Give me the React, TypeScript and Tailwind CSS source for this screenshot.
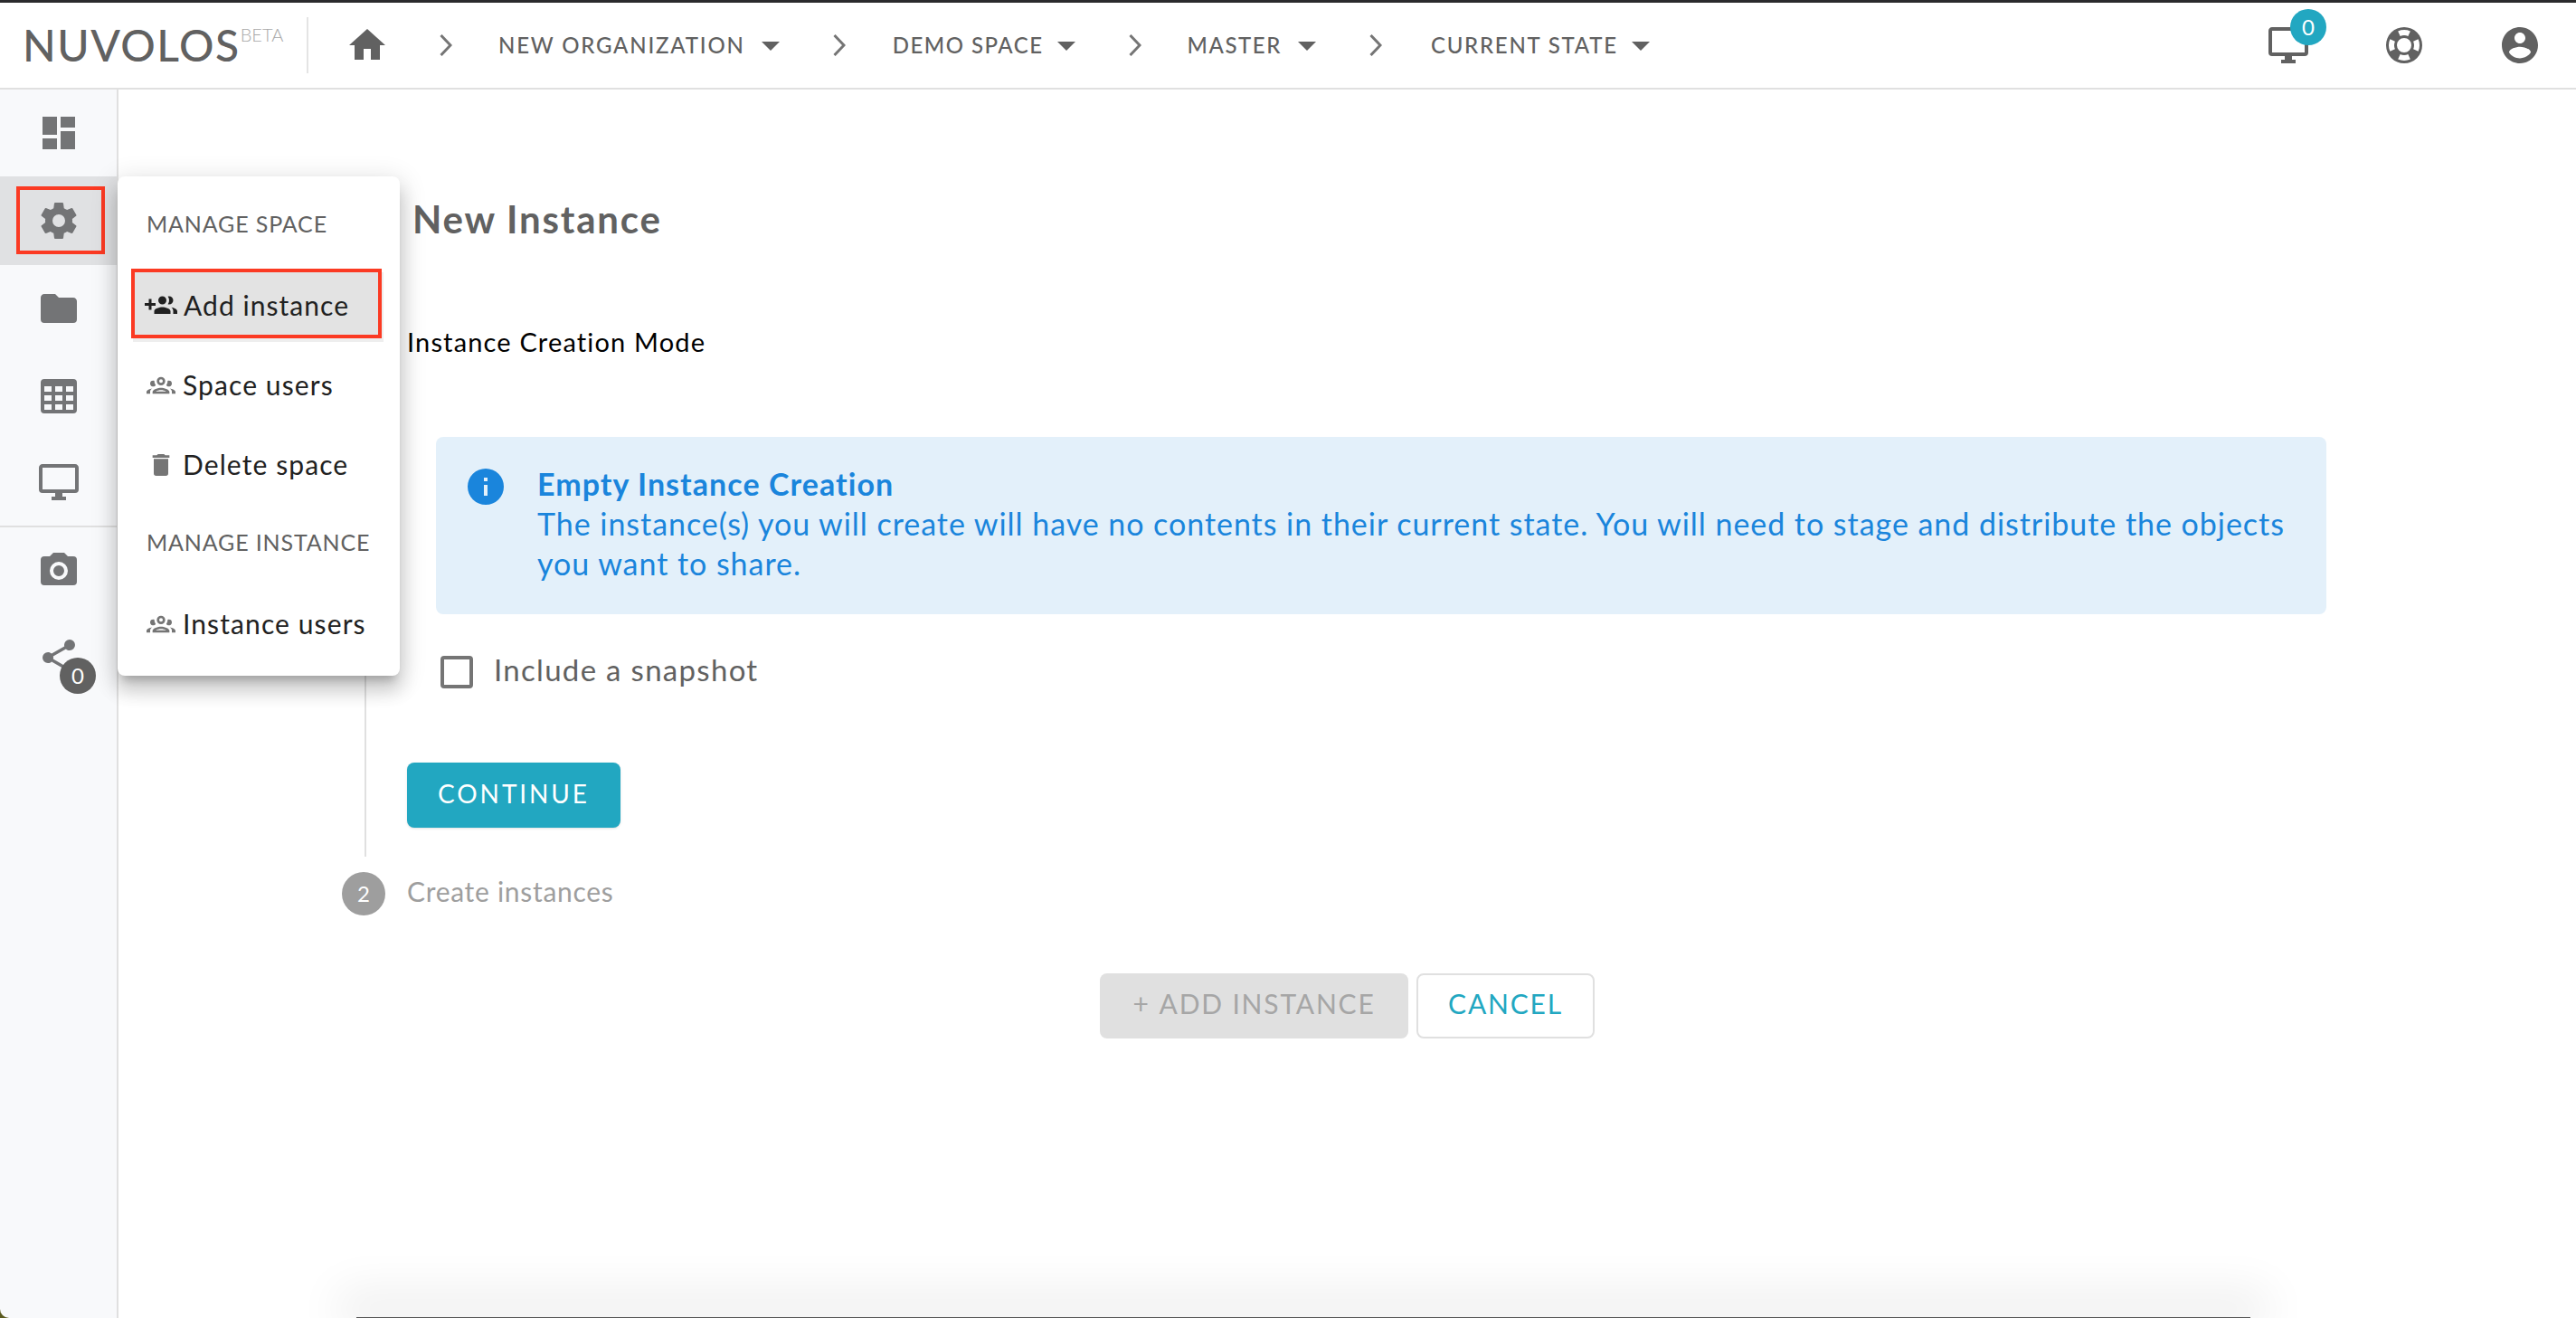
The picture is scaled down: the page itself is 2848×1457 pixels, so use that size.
const p = {
  home: "M10,20V14H14V20H19V12H22L12,3L2,12H5V20H10Z",
  caret: "M7,10L12,15L17,10H7Z",
  monitor: "M21,16H3V4H21M21,2H3C1.89,2 1,2.89 1,4V16A2,2 0 0,0 3,18H10V20H8V22H16V20H14V18H21A2,2 0 0,0 23,16V4C23,2.89 22.1,2 21,2Z",
  lifebuoy: "M19.79,15.41C20.74,13.24 20.74,10.75 19.79,8.59L17.05,9.83C17.65,11.21 17.65,12.78 17.06,14.17L19.79,15.41M15.42,4.21C13.25,3.26 10.76,3.26 8.59,4.21L9.83,6.95C11.22,6.35 12.79,6.35 14.18,6.95L15.42,4.21M4.21,8.58C3.26,10.76 3.26,13.24 4.21,15.42L6.95,14.17C6.35,12.79 6.35,11.21 6.95,9.82L4.21,8.58M8.59,19.79C10.76,20.74 13.25,20.74 15.42,19.79L14.18,17.05C12.8,17.65 11.22,17.65 9.84,17.06L8.59,19.79M12,2A10,10 0 0,1 22,12A10,10 0 0,1 12,22A10,10 0 0,1 2,12A10,10 0 0,1 12,2M12,8A4,4 0 0,0 8,12A4,4 0 0,0 12,16A4,4 0 0,0 16,12A4,4 0 0,0 12,8Z",
  account: "M12 2C6.48 2 2 6.48 2 12s4.48 10 10 10 10-4.48 10-10S17.52 2 12 2zm0 3c1.66 0 3 1.34 3 3s-1.34 3-3 3-3-1.34-3-3 1.34-3 3-3zm0 14.2c-2.5 0-4.71-1.28-6-3.22.03-1.99 4-3.08 6-3.08 1.99 0 5.97 1.09 6 3.08-1.29 1.94-3.5 3.22-6 3.22z",
  dashboard: "M13,3V9H21V3M13,21H21V11H13M3,21H11V15H3M3,13H11V3H3V13Z",
  cog: "M12,15.5A3.5,3.5 0 0,1 8.5,12A3.5,3.5 0 0,1 12,8.5A3.5,3.5 0 0,1 15.5,12A3.5,3.5 0 0,1 12,15.5M19.43,12.97C19.47,12.65 19.5,12.33 19.5,12C19.5,11.67 19.47,11.34 19.43,11L21.54,9.37C21.73,9.22 21.78,8.95 21.66,8.73L19.66,5.27C19.54,5.05 19.27,4.96 19.05,5.05L16.56,6.05C16.04,5.66 15.5,5.32 14.87,5.07L14.5,2.42C14.46,2.18 14.25,2 14,2H10C9.75,2 9.54,2.18 9.5,2.42L9.13,5.07C8.5,5.32 7.96,5.66 7.44,6.05L4.95,5.05C4.73,4.96 4.46,5.05 4.34,5.27L2.34,8.73C2.21,8.95 2.27,9.22 2.46,9.37L4.57,11C4.53,11.34 4.5,11.67 4.5,12C4.5,12.33 4.53,12.65 4.57,12.97L2.46,14.63C2.27,14.78 2.21,15.05 2.34,15.27L4.34,18.73C4.46,18.95 4.73,19.03 4.95,18.95L7.44,17.94C7.96,18.34 8.5,18.68 9.13,18.93L9.5,21.58C9.54,21.82 9.75,22 10,22H14C14.25,22 14.46,21.82 14.5,21.58L14.87,18.93C15.5,18.67 16.04,18.34 16.56,17.94L19.05,18.95C19.27,19.03 19.54,18.95 19.66,18.73L21.66,15.27C21.78,15.05 21.73,14.78 21.54,14.63L19.43,12.97Z",
  folder: "M10,4H4C2.89,4 2,4.89 2,6V18A2,2 0 0,0 4,20H20A2,2 0 0,0 22,18V8C22,6.89 21.1,6 20,6H12L10,4Z",
  table: "M4,3H20A2,2 0 0,1 22,5V20A2,2 0 0,1 20,22H4A2,2 0 0,1 2,20V5A2,2 0 0,1 4,3M4,7V10H8V7H4M10,7V10H14V7H10M20,10V7H16V10H20M4,12V15H8V12H4M4,20H8V17H4V20M10,12V15H14V12H10M10,20H14V17H10V20M20,20V17H16V20H20M20,12H16V15H20V12Z",
  camera: "M4,4H7L9,2H15L17,4H20A2,2 0 0,1 22,6V18A2,2 0 0,1 20,20H4A2,2 0 0,1 2,18V6A2,2 0 0,1 4,4M12,7A5,5 0 0,0 7,12A5,5 0 0,0 12,17A5,5 0 0,0 17,12A5,5 0 0,0 12,7M12,9A3,3 0 0,1 15,12A3,3 0 0,1 12,15A3,3 0 0,1 9,12A3,3 0 0,1 12,9Z",
  share: "M18,16.08C17.24,16.08 16.56,16.38 16.04,16.85L8.91,12.7C8.96,12.47 9,12.24 9,12C9,11.76 8.96,11.53 8.91,11.3L15.96,7.19C16.5,7.69 17.21,8 18,8A3,3 0 0,0 21,5A3,3 0 0,0 18,2A3,3 0 0,0 15,5C15,5.24 15.04,5.47 15.09,5.7L8.04,9.81C7.5,9.31 6.79,9 6,9A3,3 0 0,0 3,12A3,3 0 0,0 6,15C6.79,15 7.5,14.69 8.04,14.19L15.16,18.34C15.11,18.55 15.08,18.77 15.08,19C15.08,20.61 16.39,21.91 18,21.91C19.61,21.91 20.92,20.61 20.92,19A2.92,2.92 0 0,0 18,16.08Z",
  addGroup: "M13 13C11 13 7 14 7 16V18H19V16C19 14 15 13 13 13M19.62 13.16C20.45 13.88 21 14.82 21 16V18H24V16C24 14.46 21.63 13.5 19.62 13.16M13 11A3 3 0 0 0 16 8A3 3 0 0 0 13 5A3 3 0 0 0 10 8A3 3 0 0 0 13 11M18 11A3 3 0 0 0 21 8A3 3 0 0 0 18 5C17.68 5 17.37 5.05 17.08 5.14C17.65 5.95 18 6.94 18 8C18 9.06 17.65 10.04 17.08 10.85C17.37 10.95 17.68 11 18 11M8 10H5V7H3V10H0V12H3V15H5V12H8V10Z",
  group: "M12,5A3.5,3.5 0 0,0 8.5,8.5A3.5,3.5 0 0,0 12,12A3.5,3.5 0 0,0 15.5,8.5A3.5,3.5 0 0,0 12,5M12,7A1.5,1.5 0 0,1 13.5,8.5A1.5,1.5 0 0,1 12,10A1.5,1.5 0 0,1 10.5,8.5A1.5,1.5 0 0,1 12,7M5.5,8A2.5,2.5 0 0,0 3,10.5C3,11.44 3.53,12.25 4.29,12.68C4.65,12.88 5.06,13 5.5,13C5.94,13 6.35,12.88 6.71,12.68C7.08,12.47 7.39,12.17 7.62,11.81C6.89,10.86 6.5,9.7 6.5,8.5C6.5,8.41 6.5,8.31 6.5,8.22C6.2,8.08 5.86,8 5.5,8M18.5,8C18.14,8 17.8,8.08 17.5,8.22C17.5,8.31 17.5,8.41 17.5,8.5C17.5,9.7 17.11,10.86 16.38,11.81C16.5,12 16.63,12.15 16.78,12.3C16.94,12.45 17.1,12.58 17.29,12.68C17.65,12.88 18.06,13 18.5,13C18.94,13 19.35,12.88 19.71,12.68C20.47,12.25 21,11.44 21,10.5A2.5,2.5 0 0,0 18.5,8M12,14C9.66,14 5,15.17 5,17.5V19H19V17.5C19,15.17 14.34,14 12,14M4.71,14.55C2.78,14.78 0,15.76 0,17.5V19H3V17.07C3,16.06 3.69,15.22 4.71,14.55M19.29,14.55C20.31,15.22 21,16.06 21,17.07V19H24V17.5C24,15.76 21.22,14.78 19.29,14.55M12,16C13.53,16 15.24,16.5 16.23,17H7.77C8.76,16.5 10.47,16 12,16Z",
  trash: "M19,4H15.5L14.5,3H9.5L8.5,4H5V6H19M6,19A2,2 0 0,0 8,21H16A2,2 0 0,0 18,19V7H6V19Z",
  info: "M13,9H11V7H13M13,17H11V11H13M12,2A10,10 0 0,0 2,12A10,10 0 0,0 12,22A10,10 0 0,0 22,12A10,10 0 0,0 12,2Z",
};

const Icon = ({ d, className }: { d: string; className: string }) => (
  <svg viewBox="0 0 24 24" fill="currentColor" fillRule="evenodd" className={className}>
    <path d={d} />
  </svg>
);

const Chevron = () => (
  <svg viewBox="0 0 14 24" fill="none" stroke="#757575" strokeWidth="3" className="h-[24px] w-[14px] shrink-0">
    <path d="M1.5,1 L12,12 L1.5,23" />
  </svg>
);

const Crumb = ({ label, className, text, caret }: { label: string; className: string; text: string; caret: string }) => (
  <div className={`flex items-center ${className}`}>
    <span className={`text-[24px] leading-none font-medium text-[#616161] ${text}`}>{label}</span>
    <Icon d={p.caret} className={`h-[48px] w-[48px] text-[#616161] ${caret}`} />
  </div>
);

const SideItem = ({ d, className }: { d: string; className: string }) => (
  <div className={`flex items-center justify-center text-[#737476] ${className}`}>
    <Icon d={d} className="h-[48px] w-[48px]" />
  </div>
);

const MenuRow = ({ d, label, icon }: { d: string; label: string; icon: string }) => (
  <div className="flex h-[88px] items-center pl-[32px]">
    <Icon d={d} className={`h-[32px] w-[32px] shrink-0 ${icon}`} />
    <span className="ml-[8px] pb-[1px] text-[30px] tracking-[1.1px] text-[#212121]">{label}</span>
  </div>
);

const MenuHeader = ({ label, className }: { label: string; className: string }) => (
  <div className={`flex items-center pl-[32px] text-[25px] tracking-[0.85px] text-[#616161] ${className}`}>{label}</div>
);

export default function App() {
  return (
    <div className="relative flex h-screen w-full flex-col overflow-hidden bg-white font-['Lato',sans-serif]">
      <div className="h-[3px] bg-[#2b2b2d]" />

      {/* top bar */}
      <header className="flex h-[96px] shrink-0 items-center border-b-2 border-[#e0e0e0]">
        <div className="ml-[25px] flex w-[314px] items-start">
          <span className="text-[48px] font-medium leading-[50px] tracking-[1.5px] text-[#616161]">NUVOLOS</span>
          <span className="mt-[3px] text-[20px] font-light leading-[20px] text-[#a8a8a8]">BETA</span>
        </div>
        <div className="h-[62px] w-[2px] bg-[#e4e4e4]" />
        <Icon d={p.home} className="ml-[41px] h-[48px] w-[48px] text-[#616161]" />
        <div className="ml-[56px]"><Chevron /></div>
        <Crumb label="NEW ORGANIZATION" className="ml-[51px]" text="tracking-[1.8px]" caret="ml-[4px]" />
        <div className="ml-[45px]"><Chevron /></div>
        <Crumb label="DEMO SPACE" className="ml-[52px]" text="tracking-[1.5px]" caret="ml-[1px]" />
        <div className="ml-[45px]"><Chevron /></div>
        <Crumb label="MASTER" className="ml-[51px]" text="tracking-[1.55px]" caret="ml-[4px]" />
        <div className="ml-[45px]"><Chevron /></div>
        <Crumb label="CURRENT STATE" className="ml-[54px]" text="tracking-[1.75px]" caret="ml-[1px]" />

        <div className="ml-auto flex items-center">
          <div className="relative">
            <Icon d={p.monitor} className="h-[48px] w-[48px] text-[#616161]" />
            <span className="absolute left-[26px] top-[-16px] flex h-[40px] w-[40px] items-center justify-center rounded-full bg-[#22a7c1] text-[24px] text-white">0</span>
          </div>
          <Icon d={p.lifebuoy} className="ml-[80px] h-[48px] w-[48px] text-[#616161]" />
          <Icon d={p.account} className="ml-[80px] mr-[38px] h-[48px] w-[48px] text-[#616161]" />
        </div>
      </header>

      <div className="flex min-h-0 flex-1">
        {/* side rail */}
        <aside className="flex w-[131px] shrink-0 flex-col border-r-2 border-[#e0e0e0] bg-[#f8f9fb]">
          <SideItem d={p.dashboard} className="h-[96px]" />
          <SideItem d={p.cog} className="h-[98px] bg-[#e0e1e3]" />
          <SideItem d={p.folder} className="h-[96px]" />
          <SideItem d={p.table} className="h-[96px]" />
          <SideItem d={p.monitor} className="h-[96px]" />
          <div className="h-[2px] bg-[#e0e0e0]" />
          <SideItem d={p.camera} className="h-[96px]" />
          <div className="relative">
            <SideItem d={p.share} className="h-[96px]" />
            <span className="absolute left-[66px] top-[48px] flex h-[40px] w-[40px] items-center justify-center rounded-full bg-[#616161] text-[24px] text-white">0</span>
          </div>
        </aside>

        {/* page */}
        <main className="min-w-0 flex-1 pt-[119px]">
          <h1 className="ml-[325px] text-[42px] font-bold leading-[48px] tracking-[1.8px] text-[#616161]">New Instance</h1>

          <div className="ml-[272px] mt-[34px] border-l-2 border-[#e0e0e0] pb-[32px] pl-[45px]">
            <div className="pt-[58px] text-[29px] leading-[40px] tracking-[1.16px] text-black">Instance Creation Mode</div>

            <div className="ml-[32px] mt-[85px] flex h-[196px] w-[2090px] rounded-lg bg-[#e3f0fa] pl-[31px] pt-[31px] text-[#1a85dc]">
              <Icon d={p.info} className="h-[48px] w-[48px] shrink-0" />
              <div className="-mt-px ml-[33px] text-[34px] leading-[44px] tracking-[0.96px]">
                <div className="font-bold tracking-[1.05px]">Empty Instance Creation</div>
                <div>The instance(s) you will create will have no contents in their current state. You will need to stage and distribute the objects</div>
                <div>you want to share.</div>
              </div>
            </div>

            <div className="ml-[37px] mt-[46px] flex h-[36px] items-center">
              <div className="h-[36px] w-[36px] rounded-[4px] border-[4px] border-[#757575]" />
              <span className="ml-[23px] pb-[5px] text-[33px] tracking-[1.3px] text-[#616161]">Include a snapshot</span>
            </div>

            <button className="mt-[82px] flex h-[72px] w-[236px] items-center justify-center rounded-lg bg-[#22a7c1] pb-[4px] text-[28px] tracking-[2.9px] text-white shadow-sm">CONTINUE</button>
          </div>

          <div className="ml-[247px] mt-[16px] flex items-center">
            <span className="flex h-[48px] w-[48px] items-center justify-center rounded-full bg-[#9e9e9e] text-[24px] text-white">2</span>
            <span className="ml-[24px] pb-[4px] text-[30px] tracking-[0.7px] text-[#9e9e9e]">Create instances</span>
          </div>

          <div className="ml-[1085px] mt-[64px] flex gap-[9px]">
            <button className="flex h-[72px] w-[341px] items-center justify-center rounded-lg bg-[#e0e0e0] pb-[6px] text-[30px] tracking-[1.8px] text-[#a6a6a6]">
              <span className="mr-[10px]">+</span>ADD INSTANCE
            </button>
            <button className="flex h-[72px] w-[197px] items-center justify-center rounded-lg border-2 border-[#e0e0e0] bg-white pb-[6px] text-[30px] tracking-[1.8px] text-[#22a7c1]">CANCEL</button>
          </div>
        </main>
      </div>

      {/* annotation round the cog */}
      <div className="absolute left-[18px] top-[206px] h-[75px] w-[98px] border-4 border-[#fb3a23]" />

      {/* manage menu */}
      <div className="absolute left-[130px] top-[195px] h-[552px] w-[312px] rounded-lg bg-white pt-[9px] shadow-[0_10px_10px_-6px_rgba(0,0,0,0.2),0_16px_20px_2px_rgba(0,0,0,0.14),0_6px_28px_4px_rgba(0,0,0,0.12)]">
        <MenuHeader label="MANAGE SPACE" className="h-[88px]" />
        <div className="relative mt-[2px]">
          <div className="absolute left-[15px] top-[3px] h-[77px] w-[277px] border-4 border-[#fb3a23] bg-[#e3e3e3] shadow-[2px_4px_0_#eeeeee]" />
          <div className="relative flex h-[88px] items-center pl-[30px]">
            <Icon d={p.addGroup} className="h-[36px] w-[36px] shrink-0 text-[#212121]" />
            <span className="ml-[7px] pb-[2px] text-[30px] tracking-[1.05px] text-[#212121]">Add instance</span>
          </div>
        </div>
        <MenuRow d={p.group} label="Space users" icon="text-[#757575]" />
        <MenuRow d={p.trash} label="Delete space" icon="text-[#757575]" />
        <MenuHeader label="MANAGE INSTANCE" className="mb-[4px] h-[84px]" />
        <MenuRow d={p.group} label="Instance users" icon="text-[#757575]" />
      </div>

      {/* edge of a window below */}
      <div className="absolute bottom-0 left-[394px] h-px w-[2094px] bg-[#555555] shadow-[0_-10px_50px_20px_rgba(0,0,0,0.07)]" />

      {/* rounded corner of the captured window */}
      <div className="absolute bottom-0 left-0 h-[10px] w-[10px] bg-[#5a5a1e]">
        <div className="h-full w-full rounded-bl-[10px] bg-[#f8f9fb]" />
      </div>
    </div>
  );
}
